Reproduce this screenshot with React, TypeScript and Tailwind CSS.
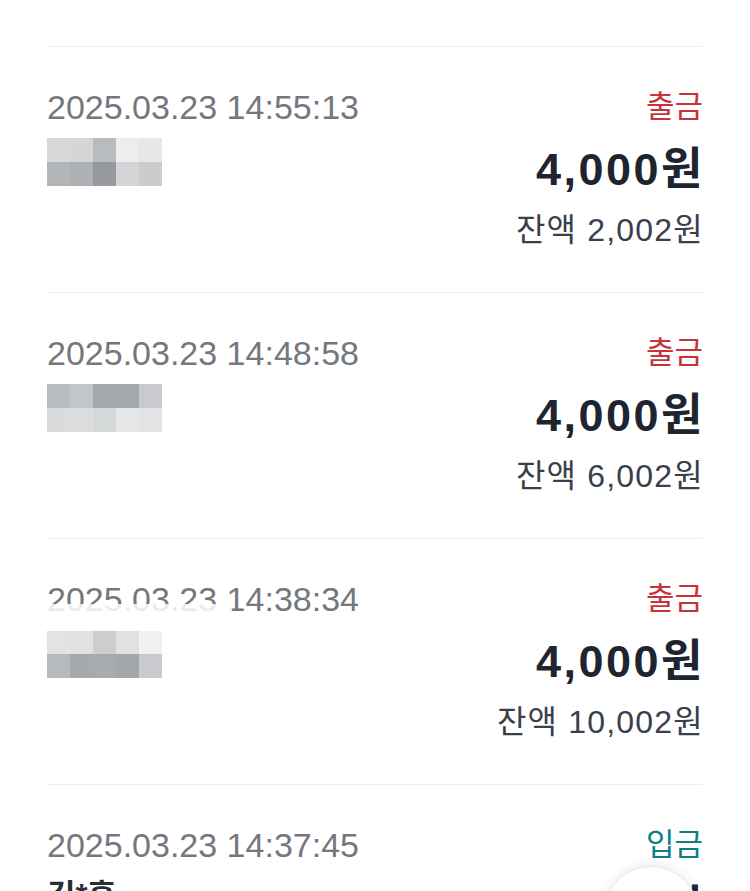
import React from "react";

type Tx = {
  date: string;
  kind: "출금" | "입금";
  amount: string;
  balance: string;
  mosaic?: string[][];
  name?: string;
  veil?: boolean;
};

const FONT = { fontFamily: '"Liberation Sans", "Noto Sans CJK KR", sans-serif' };

const items: Tx[] = [
  {
    date: "2025.03.23 14:55:13",
    kind: "출금",
    amount: "4,000원",
    balance: "잔액 2,002원",
    mosaic: [
      ["#d5d7d9", "#d4d6d8", "#b9bcbf", "#ecedee", "#e6e7e8"],
      ["#b3b6b9", "#aeb1b4", "#96999d", "#d3d4d6", "#caccce"],
    ],
  },
  {
    date: "2025.03.23 14:48:58",
    kind: "출금",
    amount: "4,000원",
    balance: "잔액 6,002원",
    mosaic: [
      ["#b8bbbf", "#c3c6c9", "#a5a8ad", "#a4a7ac", "#c8cacd"],
      ["#d9dbdc", "#dadcdd", "#d5d8d8", "#e6e7e8", "#e3e4e6"],
    ],
  },
  {
    date: "2025.03.23 14:38:34",
    kind: "출금",
    amount: "4,000원",
    balance: "잔액 10,002원",
    veil: true,
    mosaic: [
      ["#e2e3e4", "#e0e1e2", "#cbcdcf", "#e0e1e2", "#f0f1f2"],
      ["#b7babd", "#a6a9ad", "#a9acaf", "#a3a6aa", "#c8cacd"],
    ],
  },
  { date: "2025.03.23 14:37:45", kind: "입금", amount: "5,000원", balance: "잔액 14,002원", name: "김*훈" },
];

const Mosaic = ({ rows }: { rows: string[][] }) => (
  <div className="mt-[13px] flex flex-col">
    {rows.map((row, i) => (
      <div key={i} className="flex">
        {row.map((c, j) => (
          <div key={j} className="w-[23px] h-[24px]" style={{ backgroundColor: c }} />
        ))}
      </div>
    ))}
  </div>
);

const TxRow = ({ tx }: { tx: Tx }) => (
  <div className="relative h-[246px] border-t border-[#eceef0] pt-[42px] flex justify-between">
    {/* date + name */}
    <div className="flex flex-col">
      <span className="text-[34px] leading-[36px] text-[#74777e]">{tx.date}</span>
      {tx.mosaic && <Mosaic rows={tx.mosaic} />}
      {tx.name && (
        <span className="mt-[9px] text-[31px] leading-[48px] font-bold text-[#2a2e35]">{tx.name}</span>
      )}
    </div>

    {/* kind, amount, balance */}
    <div className="flex flex-col items-end">
      <span
        className={
          tx.kind === "출금"
            ? "text-[31px] leading-[36px] text-[#c7333a]"
            : "text-[31px] leading-[36px] text-[#0f7f86]"
        }
      >
        {tx.kind}
      </span>
      <span className="mt-[19px] mr-[-2px] text-[45px] leading-[52px] font-bold tracking-[2.5px] text-[#1f2530]">
        {tx.amount}
      </span>
      <span className="mt-[14px] mr-[-1px] text-[32px] leading-[40px] tracking-[1.2px] text-[#3a404a]">
        {tx.balance}
      </span>
    </div>

    {/* blurred cover over the name area */}
    {tx.veil && (
      <div className="absolute left-0 top-[65px] w-[185px] h-[27px] bg-white/85" />
    )}
  </div>
);

export default function App() {
  return (
    <div className="relative w-[750px] h-[891px] overflow-hidden bg-white" style={FONT}>
      <div className="px-[47px] pt-[46px]">
        {items.map((tx, i) => (
          <TxRow key={i} tx={tx} />
        ))}
      </div>

      {/* floating button */}
      <div className="absolute left-[603px] top-[866px] size-[96px] rounded-full bg-white border border-[#e6e7ea] shadow-[0_-2px_12px_rgba(0,0,0,0.08)]" />
    </div>
  );
}
